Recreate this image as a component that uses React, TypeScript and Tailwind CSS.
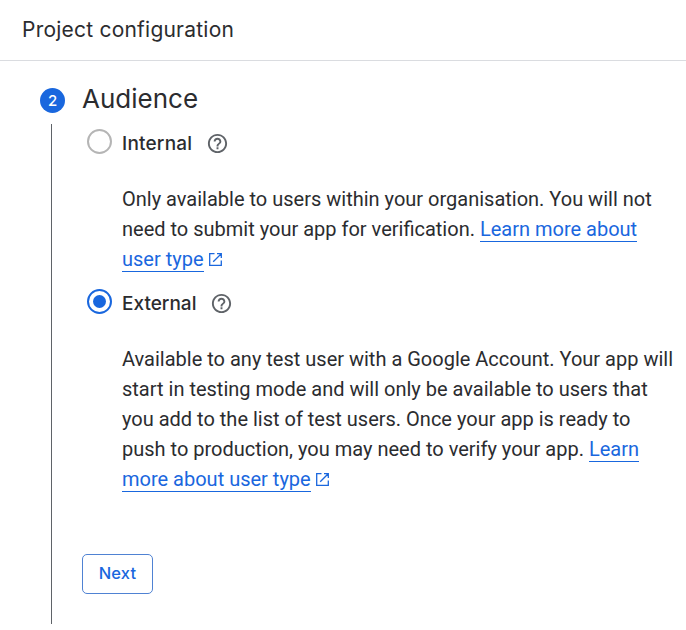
import React from "react";

function Help() {
  return (
    <svg className="mt-[3px] size-[23px] shrink-0" viewBox="0 0 24 24" fill="#5f6368">
      <path d="M11 18h2v-2h-2v2zm1-16C6.480 2 2 6.480 2 12s4.480 10 10 10 10-4.480 10-10S17.520 2 12 2zm0 18c-4.410 0-8-3.590-8-8s3.590-8 8-8 8 3.590 8 8-3.590 8-8 8zm0-14c-2.210 0-4 1.790-4 4h2c0-1.100.9-2 2-2s2 .9 2 2c0 2-3 1.750-3 5h2c0-2.250 3-2.500 3-5 0-2.210-1.790-4-4-4z" />
    </svg>
  );
}

function External() {
  return (
    <svg className="ml-[5px] inline-block size-[13px] align-[0px]" viewBox="0 0 13 13" fill="none" stroke="#1a67de" strokeWidth="1.3">
      <path d="M5.500.7H.7v11.600h11.600V7.500M8 .7h4.300V5M12.200.8 4.200 8.800" />
    </svg>
  );
}

function Link({ children }: { children: React.ReactNode }) {
  return <a className="border-b border-[#1967de] text-[#1a67de]">{children}</a>;
}

function Radio({ checked = false }: { checked?: boolean }) {
  return (
    <span className={checked ? "flex size-[25px] items-center justify-center rounded-full border-2 border-[#1967de]" : "flex size-[25px] rounded-full border-2 border-[#b5b5b5]"}>
      {checked && <span className="size-[13px] rounded-full bg-[#1967de]" />}
    </span>
  );
}

function Option({ label, checked }: { label: string; checked?: boolean }) {
  return (
    <div className="ml-[5px] flex h-[25px] items-center">
      <Radio checked={checked} />
      <b className={checked ? "mt-[5px] ml-[10px] w-[88px] font-[Inter,sans-serif] text-[19px] font-medium" : "mt-[5px] ml-[10px] w-[84px] font-[Inter,sans-serif] text-[19px] font-medium tracking-[0.2px]"}>{label}</b>
      <Help />
    </div>
  );
}

export default function App() {
  return (
    <div className="h-[630px] w-[686px] overflow-hidden bg-white font-[Roboto,sans-serif] text-[20px] leading-[30px] text-[#2b2c2f]">
      <header className="h-[61px] border-b border-[#dadce0] pt-[15px] pl-[22px] font-[Inter,sans-serif] text-[21px] tracking-[0.22px]">Project configuration</header>
      <main className="flex pl-10">
        <div className="flex w-[25px] flex-col items-center pt-[27px]">
          <span className="flex size-[25px] items-center justify-center rounded-full bg-[#1967de] font-[Inter,sans-serif] text-[15px] font-medium text-white">2</span>
          <span className="mt-[11px] mr-[2px] h-[500px] w-px bg-[#5f6368]" />
        </div>
        <section className="ml-[17px] w-[604px] pt-[20px]">
          <h1 className="mb-[12px] h-[36px] font-[Inter,sans-serif] text-[26px] leading-[36px]">Audience</h1>
          <Option label="Internal" />
          <p className="mt-[30px] mb-[15px] ml-10 whitespace-nowrap">
            Only available to users within your organisation. You will not<br />
            need to submit your app for verification. <Link>Learn more about</Link><br />
            <Link>user type</Link><External />
          </p>
          <Option label="External" checked />
          <p className="mt-[30px] ml-10 whitespace-nowrap">
            Available to any test user with a Google Account. Your app will<br />
            start in testing mode and will only be available to users that<br />
            you add to the list of test users. Once your app is ready to<br />
            push to production, you may need to verify your app. <Link>Learn</Link><br />
            <Link>more about user type</Link><External />
          </p>
          <button className="mt-[60px] h-10 w-[71px] rounded-[5px] border border-[#4f82d3] pb-[2px] font-[Inter,sans-serif] text-[16.5px] font-medium tracking-[0.2px] text-[#1967de]">Next</button>
        </section>
      </main>
    </div>
  );
}
